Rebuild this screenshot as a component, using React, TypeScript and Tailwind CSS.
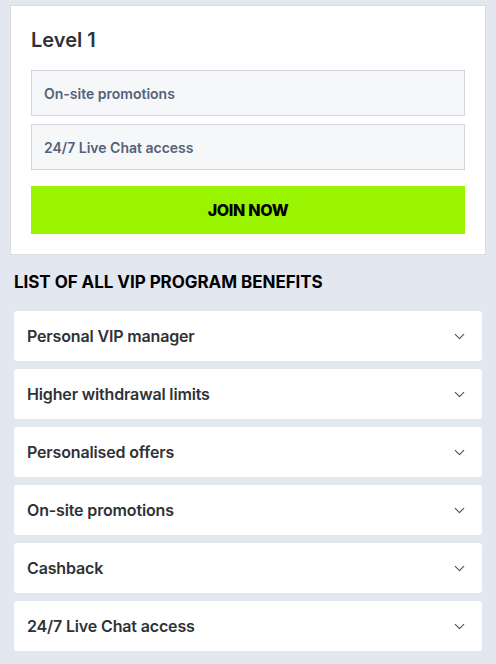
import { ChevronDown } from "lucide-react";

const perks = ["On-site promotions", "24/7 Live Chat access"];

const benefits = [
  "Personal VIP manager",
  "Higher withdrawal limits",
  "Personalised offers",
  "On-site promotions",
  "Cashback",
  "24/7 Live Chat access",
];

export default function App() {
  return (
    <div
      className="min-h-[664px] w-[496px] bg-[#e3e7f0] px-[10px] pt-[5px] pb-3"
      style={{ fontFamily: "Inter, 'Noto Sans', sans-serif" }}
    >
      <div className="border border-[#d9dde4] bg-white px-5 pt-[18px] pb-5">
        <h2 className="text-[20px] font-semibold leading-[32px] text-[#2f3237]">Level 1</h2>
        <div className="mt-[14px] flex flex-col gap-[8px]">
          {perks.map((p) => (
            <div
              key={p}
              className="flex h-[46px] items-center border border-[#d3d6dc] bg-[#f6f7f8] px-3 text-[14px] font-semibold text-[#53627a]"
            >
              {p}
            </div>
          ))}
        </div>
        <button className="mt-[16px] flex h-[48px] w-full items-center justify-center bg-[#9af300] text-[16px] font-extrabold tracking-[-0.3px] text-black">
          JOIN NOW
        </button>
      </div>

      <h3 className="mt-[15px] px-1 text-[17px] font-bold leading-[24px] tracking-[-0.05px] text-black">
        LIST OF ALL VIP PROGRAM BENEFITS
      </h3>

      <div className="mt-[17px] flex flex-col gap-[8px] px-1">
        {benefits.map((b) => (
          <div
            key={b}
            className="flex h-[50px] items-center justify-between rounded-[3px] bg-white pl-[13px] pr-[14px]"
          >
            <span className="text-[16px] font-semibold tracking-[-0.15px] text-[#2f3237]">{b}</span>
            <ChevronDown size={17} strokeWidth={1.6} className="text-[#4b4f57]" />
          </div>
        ))}
      </div>
    </div>
  );
}
